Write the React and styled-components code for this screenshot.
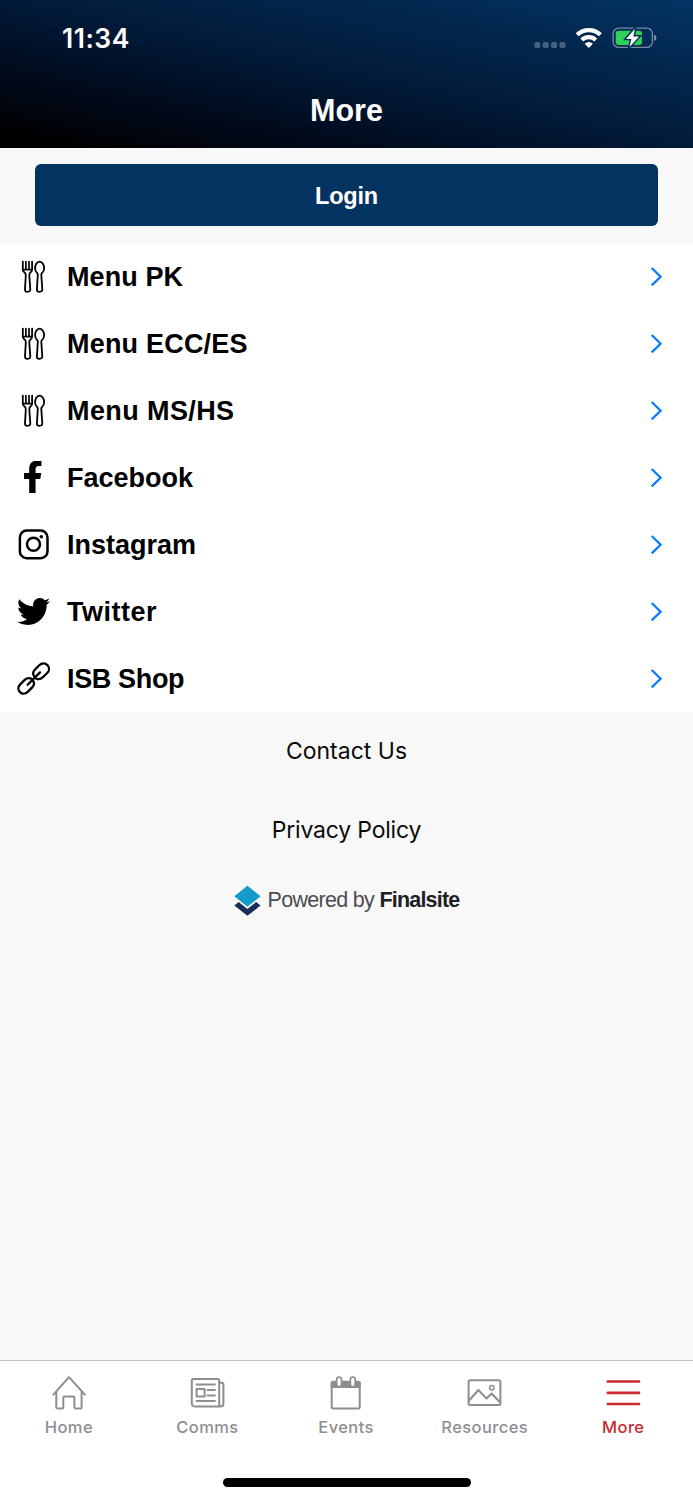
import React, { useState } from 'react';
import styled, { createGlobalStyle } from 'styled-components';
import { FaFacebookF, FaTwitter } from 'react-icons/fa';

const GlobalStyle = createGlobalStyle`
  * {
    box-sizing: border-box;
  }
  body {
    margin: 0;
    background-color: #f8f8f8;
    font-family: Inter, sans-serif;
  }
  button {
    border: none;
    background: none;
    padding: 0;
    font-family: inherit;
  }
  svg {
    display: block;
    flex-shrink: 0;
  }
`;

const SScreen = styled.div`
  display: flex;
  flex-direction: column;
  width: 693px;
  height: 1500px;
  background-color: #f8f8f8;
`;

const SHeader = styled.header`
  height: 147.5px;
  background: linear-gradient(
    to top right,
    #000 0%,
    #000 5%,
    #010a1c 26%,
    #021a38 50%,
    #033464 100%
  );
  color: white;
`;

const SStatusBar = styled.div`
  display: flex;
  align-items: center;
  justify-content: space-between;
  height: 76px;
  padding: 0 35px 0 62px;
`;

const STime = styled.div`
  font-size: 26.5px;
  font-weight: 600;
  letter-spacing: 0.5px;
`;

const STitle = styled.h1`
  margin: 0;
  text-align: center;
  font-family: 'Liberation Sans', sans-serif;
  font-size: 30.5px;
  font-weight: bold;
  line-height: 69px;
`;

const SLoginArea = styled.div`
  height: 95.5px;
  padding: 16.5px 35px;
`;

const SLoginButton = styled.button`
  display: block;
  width: 100%;
  height: 62px;
  padding-top: 3px;
  border-radius: 6px;
  background-color: #033361;
  color: white;
  font-family: 'Liberation Sans', sans-serif;
  font-size: 23.5px;
  font-weight: bold;
  letter-spacing: -0.2px;
`;

const SMenuList = styled.nav`
  display: flex;
  flex-direction: column;
  background-color: white;
`;

const SMenuRow = styled.button`
  display: flex;
  align-items: center;
  height: 67px;
  padding: 0 29px 0 16px;
  color: black;
`;

const SMenuIcon = styled.span`
  display: flex;
  align-items: center;
  justify-content: center;
  width: 35px;
  height: 35px;
  margin-right: 16px;
`;

const SMenuName = styled.span`
  flex: 1;
  padding-top: 1px;
  text-align: left;
  font-family: 'Liberation Sans', sans-serif;
  font-size: 27px;
  font-weight: bold;
  letter-spacing: ${props => props.$spacing || 0}px;
`;

const SFooter = styled.footer`
  display: flex;
  flex: 1;
  flex-direction: column;
  align-items: center;
`;

const SFooterLink = styled.div`
  height: 78.5px;
  line-height: 78.5px;
  font-size: 23px;
  letter-spacing: ${props => props.$spacing || 0}px;
  color: #0a0a0a;
`;

const SPowered = styled.div`
  display: flex;
  align-items: center;
  height: 62px;
  font-family: 'Liberation Sans', sans-serif;
  font-size: 21.5px;
  letter-spacing: -0.7px;
  color: #4c4d51;
  white-space: pre;
`;

const SPoweredText = styled.span`
  margin-left: 7px;
`;

const SBrand = styled.strong`
  letter-spacing: -0.8px;
  color: #1f2024;
`;

const STabBar = styled.nav`
  display: flex;
  height: 103px;
  border-top: 1px solid #c4c4c6;
  background-color: white;
`;

const STab = styled.button`
  display: flex;
  flex: 1;
  flex-direction: column;
  align-items: center;
  padding-top: 13px;
  color: ${props => (props.$active ? '#c9292f' : '#8e8e92')};
`;

const STabName = styled.span`
  margin-top: 4px;
  margin-right: 0.8px;
  font-size: 16.5px;
  font-weight: 500;
  line-height: 22px;
  letter-spacing: 0.4px;
`;

const SHomeArea = styled.div`
  height: 37px;
  padding-top: 15px;
  background-color: white;
`;

const SHomeIndicator = styled.div`
  width: 248px;
  height: 8.5px;
  margin: 0 auto;
  border-radius: 5px;
  background-color: black;
`;

function StatusIcons() {
  return (
    <svg width="124" height="28" viewBox="534 24 124 28" fill="none">
      <g fill="#fff" fillOpacity="0.27">
        <rect x="534.3" y="42" width="6" height="6" rx="1.8" />
        <rect x="542.7" y="42" width="6" height="6" rx="1.8" />
        <rect x="551.1" y="42" width="6" height="6" rx="1.8" />
        <rect x="559.5" y="42" width="6" height="6" rx="1.8" />
      </g>
      <g stroke="#fff" strokeWidth="4.3">
        <path d="M577.2 34.8 A16.7 16.7 0 0 1 600.4 34.8" />
        <path d="M581.8 40 A10.2 10.2 0 0 1 595.8 40" />
      </g>
      <path
        d="M588.8 47.9 L584.7 43.8 Q588.8 40.2 592.9 43.8 Z"
        fill="#fff"
      />
      <rect
        x="613.1"
        y="28.1"
        width="39.3"
        height="19.3"
        rx="5.6"
        stroke="#fff"
        strokeOpacity="0.45"
        strokeWidth="1.4"
      />
      <path d="M654.2 34.5 Q656.5 35.4 656.5 37.8 Q656.5 40.2 654.2 41.1Z" fill="#fff" fillOpacity="0.5" />
      <rect x="615.7" y="30.8" width="26.3" height="14.2" rx="3" fill="#30d158" />
      <path
        d="M634.9 28.8 L626 38.9 H631.4 L629.5 46.9 L639.2 36.5 H633.4 Z"
        fill="#fff"
        stroke="#032a51"
        strokeWidth="2.8"
        paintOrder="stroke"
      />
    </svg>
  );
}

function MealIcon() {
  return (
    <svg width="35" height="35" viewBox="0 0 35 35" fill="none" stroke="#000" strokeWidth="1.8" strokeLinecap="round" strokeLinejoin="round">
      <path d="M6.8 2.6 V10.6 Q6.8 12.3 8.3 13.2 Q9.9 14 9.8 16.5 L9 30.4 Q9 32.8 11.6 32.8 Q14.4 32.8 14.3 30.4 L13.3 16.5 Q13.2 14 14.7 13.2 Q16.1 12.3 16.1 10.6 V2.6" />
      <path d="M9.9 2.6 V9.8 M13 2.6 V9.8 M7.5 10.6 H15.5" strokeWidth="1.7" />
      <path d="M23.6 2.6 C20.7 2.6 19.1 6.2 19.1 9.2 C19.1 11.7 20 13.1 21.1 14 Q21.9 14.7 21.8 16 L20.9 30.4 Q20.9 32.8 23.6 32.8 Q26.4 32.8 26.3 30.4 L25.3 16 Q25.2 14.7 26 14 C27.2 13.1 28.1 11.7 28.1 9.2 C28.1 6.2 26.4 2.6 23.6 2.6Z" />
    </svg>
  );
}

function FacebookIcon() {
  return <FaFacebookF size={32.5} viewBox="8 6 320 512" />;
}

function InstagramIcon() {
  return (
    <svg width="35" height="35" viewBox="0 0 35 35" fill="none" stroke="#000" strokeWidth="2.5">
      <rect x="3.9" y="3.6" width="27.6" height="27.6" rx="6.8" />
      <circle cx="17.5" cy="17.3" r="6.5" />
      <circle cx="25.3" cy="9.7" r="1.8" fill="#000" stroke="none" />
    </svg>
  );
}

function LinkIcon() {
  return (
    <svg width="35" height="35" viewBox="0 0 35 35" fill="none" stroke="#000" strokeWidth="2.3" strokeLinecap="round">
      <path d="M18.5 15.8 C16.7 13.4 16.8 10.8 18.8 8.7 L23.2 4.3 C25.8 1.8 29.2 2 31.4 4.1 C33.5 6.2 33.6 9.6 31.2 12 L26.8 16.3 C24.8 18.2 22.3 18.6 20 17.4" />
      <path d="M15.4 17.8 C13.1 16.6 10.6 17 8.7 18.9 L4.2 23.4 C1.8 25.8 2 29.1 4 31.1 C6 33.1 9.3 33.3 11.7 30.9 L16.2 26.4 C18.3 24.3 18.5 21.7 16.9 19.5" />
      <path d="M11.6 23.8 L24 11.4" />
    </svg>
  );
}

function Chevron() {
  return (
    <svg width="14" height="22" viewBox="0 0 14 22" fill="none" stroke="#0a7cff" strokeWidth="2.3">
      <path d="M1.7 2 L10.6 10.7 L1.7 19.4" />
    </svg>
  );
}

function FinalsiteLogo() {
  return (
    <svg width="27" height="31" viewBox="0 0 27 31">
      <path d="M13.4 0.8 L26.6 11.2 L13.4 21.8 L0.3 11.2Z" fill="#159bca" />
      <path d="M4.7 17.1 L13.4 24 L22.1 17.1 L26.6 20.6 L13.4 30.8 L0.3 20.6Z" fill="#182e56" />
    </svg>
  );
}

const tabSvg = {
  width: 38,
  height: 38,
  viewBox: '0 0 38 38',
  fill: 'none',
  stroke: 'currentColor',
  strokeWidth: 2,
  strokeLinecap: 'round',
  strokeLinejoin: 'round',
};

function HomeIcon() {
  return (
    <svg {...tabSvg}>
      <path d="M3.4 20.7 L19 3.2 L34.8 20.7 M6.3 18 V33.2 Q6.3 34.6 7.7 34.6 H11.9 Q13.3 34.6 13.3 33.2 V23.8 Q13.3 22.4 14.7 22.4 H23 Q24.4 22.4 24.4 23.8 V33.2 Q24.4 34.6 25.8 34.6 H30.2 Q31.6 34.6 31.6 33.2 V18" />
    </svg>
  );
}

function NewsIcon() {
  return (
    <svg {...tabSvg}>
      <path d="M5 5 H28.8 Q30.2 5 30.2 6.4 V29.7 Q30.2 32.4 32.3 32.4 M30.4 8.8 H32.5 Q34.4 8.8 34.4 10.6 V29.8 Q34.4 32.6 31.7 32.6 H6.4 Q2.8 32.6 2.8 29.4 V6.8 Q2.8 5 4.6 5" />
      <path d="M7.6 10.5 H25.9 M18.5 16.1 H25.9 M18.5 21.4 H25.9 M7.6 27 H25.9" />
      <rect x="7.6" y="14.9" width="8" height="7.6" />
    </svg>
  );
}

function CalendarIcon() {
  return (
    <svg {...tabSvg}>
      <rect x="4.7" y="7.8" width="28" height="26.7" rx="1.5" />
      <path d="M4.7 8.5 H32.7 V13 H4.7Z" fill="currentColor" />
      <rect x="9.7" y="3" width="4.8" height="9.7" rx="2.4" fill="#fff" strokeWidth="1.6" />
      <rect x="23.4" y="3" width="4.8" height="9.7" rx="2.4" fill="#fff" strokeWidth="1.6" />
    </svg>
  );
}

function PictureIcon() {
  return (
    <svg {...tabSvg}>
      <rect x="2.6" y="6.2" width="31.8" height="24.9" rx="1.5" />
      <path d="M2.9 26.8 L12.4 16 L20.5 24.6 L25.6 19.6 L34 28.2" strokeWidth="2.1" />
      <circle cx="25.8" cy="13.8" r="2.2" strokeWidth="1.5" />
    </svg>
  );
}

function MenuIcon() {
  return (
    <svg {...tabSvg} strokeWidth="2.7">
      <path d="M2.8 7.5 H34 M2.8 18.8 H34 M2.8 30 H34" />
    </svg>
  );
}

const menus = [
  { name: 'Menu PK', icon: <MealIcon />, spacing: 0.1 },
  { name: 'Menu ECC/ES', icon: <MealIcon />, spacing: 0.2 },
  { name: 'Menu MS/HS', icon: <MealIcon />, spacing: 0.4 },
  { name: 'Facebook', icon: <FacebookIcon /> },
  { name: 'Instagram', icon: <InstagramIcon /> },
  { name: 'Twitter', icon: <FaTwitter size={33} />, spacing: 0.5 },
  { name: 'ISB Shop', icon: <LinkIcon />, spacing: -0.35 },
];

const tabs = [
  { name: 'Home', icon: <HomeIcon /> },
  { name: 'Comms', icon: <NewsIcon /> },
  { name: 'Events', icon: <CalendarIcon /> },
  { name: 'Resources', icon: <PictureIcon /> },
  { name: 'More', icon: <MenuIcon /> },
];

function App() {
  const [activeTab, setActiveTab] = useState('More');

  return (
    <>
      <GlobalStyle />
      <SScreen>
        <SHeader>
          <SStatusBar>
            <STime>11:34</STime>
            <StatusIcons />
          </SStatusBar>
          <STitle>More</STitle>
        </SHeader>
        <SLoginArea>
          <SLoginButton type="button">Login</SLoginButton>
        </SLoginArea>
        <SMenuList>
          {menus.map(item => (
            <SMenuRow type="button" key={item.name}>
              <SMenuIcon>{item.icon}</SMenuIcon>
              <SMenuName $spacing={item.spacing}>{item.name}</SMenuName>
              <Chevron />
            </SMenuRow>
          ))}
        </SMenuList>
        <SFooter>
          <SFooterLink>Contact Us</SFooterLink>
          <SFooterLink $spacing={-0.2}>Privacy Policy</SFooterLink>
          <SPowered>
            <FinalsiteLogo />
            <SPoweredText>
              Powered by <SBrand>Finalsite</SBrand>
            </SPoweredText>
          </SPowered>
        </SFooter>
        <STabBar>
          {tabs.map(item => (
            <STab
              type="button"
              key={item.name}
              $active={item.name === activeTab}
              onClick={() => setActiveTab(item.name)}
            >
              {item.icon}
              <STabName>{item.name}</STabName>
            </STab>
          ))}
        </STabBar>
        <SHomeArea>
          <SHomeIndicator />
        </SHomeArea>
      </SScreen>
    </>
  );
}

export default App;
